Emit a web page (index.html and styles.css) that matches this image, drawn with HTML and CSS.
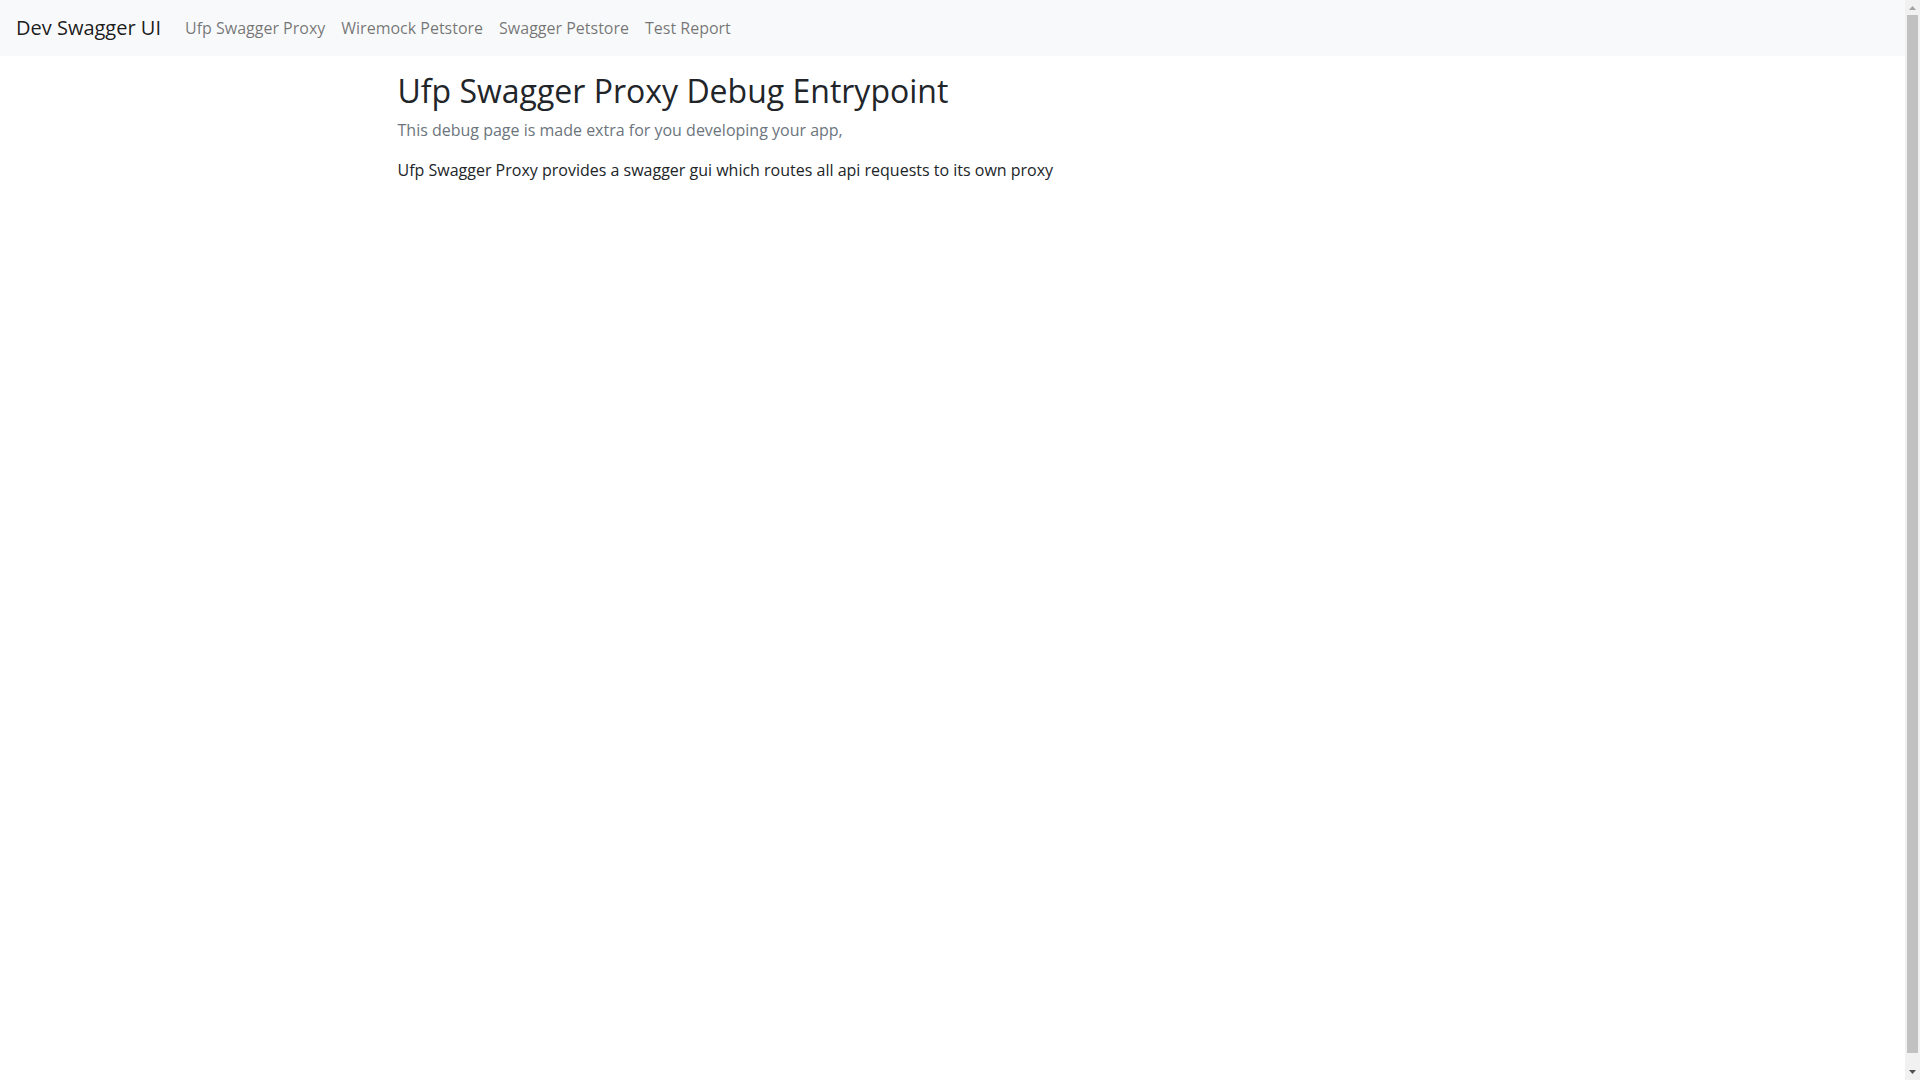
FILE: index.html
```html
<!DOCTYPE html>
<html lang="en">
<head>
<meta charset="utf-8">
<title>Dev Swagger UI</title>
<link rel="stylesheet" href="styles.css">
</head>
<body>
<div class="page">
  <nav class="navbar">
    <a class="brand" href="#">Dev Swagger UI</a>
    <ul class="nav">
      <li><a class="nav-link" href="#">Ufp Swagger Proxy</a></li>
      <li><a class="nav-link" href="#">Wiremock Petstore</a></li>
      <li><a class="nav-link" href="#">Swagger Petstore</a></li>
      <li><a class="nav-link" href="#">Test Report</a></li>
    </ul>
  </nav>
  <main class="container">
    <h1 class="title">Ufp Swagger Proxy Debug Entrypoint</h1>
    <p class="lead">This debug page is made extra for you developing your app,</p>
    <p class="text">Ufp Swagger Proxy provides a swagger gui which routes all api requests to its own proxy</p>
  </main>
</div>
<aside class="scrollbar" aria-hidden="true">
  <svg class="sb-btn" width="15" height="15" viewBox="0 0 15 15"><polygon points="4,10 11,10 7.5,6" fill="#a3a3a3"/></svg>
  <div class="sb-thumb"></div>
  <svg class="sb-btn" width="15" height="15" viewBox="0 0 15 15"><polygon points="4,5 11,5 7.5,9" fill="#505050"/></svg>
</aside>
</body>
</html>
```
FILE: styles.css
```css
html, body {
  margin: 0;
  padding: 0;
}
body {
  display: grid;
  grid-template-columns: minmax(0, 1fr) 15px;
  height: 100vh;
  overflow: hidden;
  font-family: "Open Sans", "Liberation Sans", sans-serif;
  font-size: 16px;
  line-height: 1.5;
  color: #212529;
  background: #fff;
}
.scrollbar {
  display: grid;
  grid-template-rows: 15px 1fr 15px;
  background-color: #f1f1f1;
}
.sb-btn {
  display: block;
}
.sb-thumb {
  margin: 0 2px 12px;
  background-color: #c1c1c1;
}
.navbar {
  display: flex;
  align-items: center;
  height: 56px;
  box-sizing: border-box;
  padding: 0 16px;
  background: #f8f9fa;
}
.brand {
  font-size: 20px;
  color: rgba(0,0,0,.9);
  text-decoration: none;
  margin-right: 16px;
  line-height: 30px;
}
.nav {
  display: flex;
  list-style: none;
  margin: 0;
  padding: 0;
}
.nav-link {
  display: block;
  padding: 8px;
  color: rgba(0,0,0,.55);
  text-decoration: none;
}
.container {
  width: 1140px;
  box-sizing: border-box;
  padding: 0 15px;
  margin: 0 auto;
}
.title {
  font-size: 32px;
  font-weight: 400;
  line-height: 1.2;
  margin: 0;
  padding: 16px 0 8px;
}
.lead {
  font-size: 16px;
  font-weight: 400;
  color: #6c757d;
  margin: 0 0 16px;
}
.text {
  margin: 0;
}
```
